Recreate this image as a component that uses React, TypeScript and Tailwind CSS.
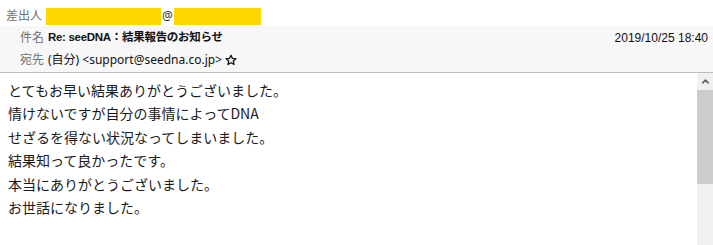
import { ChevronUp } from 'lucide-react'

const bodyLines = [
  'とてもお早い結果ありがとうございました。',
  '情けないですが自分の事情によってDNA',
  'せざるを得ない状況なってしまいました。',
  '結果知って良かったです。',
  '本当にありがとうございました。',
  'お世話になりました。',
]

function Star() {
  return (
    <svg width="12" height="12" viewBox="0 0 24 24" className="ml-[3px]">
      <path
        d="M12 2.5l2.9 6.3 6.9.7-5.2 4.6 1.5 6.8L12 17.4l-6.1 3.5 1.5-6.8-5.2-4.6 6.9-.7z"
        fill="none"
        stroke="#111"
        strokeWidth="2.6"
        strokeLinejoin="round"
      />
    </svg>
  )
}

export default function App() {
  return (
    <div className="w-[713px] h-[245px] overflow-hidden bg-white flex flex-col font-['Noto_Sans','Noto_Sans_CJK_JP',sans-serif] text-[#1a1a1a]">
      {/* From */}
      <div className="h-[26px] flex items-center pl-[6px] pt-[6px] bg-white">
        <span className="text-[12px] text-[#707070] w-[40px]">差出人</span>
        <span className="h-[17px] w-[115px] bg-[#ffd800]" />
        <span className="text-[12px] text-[#333] px-[1px]">@</span>
        <span className="h-[17px] w-[87px] bg-[#ffd800]" />
      </div>

      {/* Subject / To */}
      <div className="h-[47px] bg-[#f7f7f7] border-b border-[#bcbcbc] flex flex-col pl-[20px] pr-[5px]">
        <div className="h-[22px] mt-[1px] flex items-center">
          <span className="text-[12px] text-[#707070] w-[28px]">件名</span>
          <span className="text-[11.5px] font-bold tracking-[-0.3px] text-[#111] font-['Liberation_Sans','Noto_Sans_CJK_JP',sans-serif]">
            Re: seeDNA：結果報告のお知らせ
          </span>
          <span className="ml-auto text-[12px] text-[#111] font-['Liberation_Sans',sans-serif]">2019/10/25 18:40</span>
        </div>
        <div className="h-[24px] flex items-center">
          <span className="text-[12px] text-[#707070] w-[28px]">宛先</span>
          <span className="text-[12px] text-[#111]">(自分) &lt;support@seedna.co.jp&gt;</span>
          <Star />
        </div>
      </div>

      {/* Body */}
      <div className="flex-1 flex min-h-0">
        <div className="flex-1 pl-[8px] pt-[6px] text-[14px] leading-[23.4px] text-[#1a1a1a] font-['Noto_Sans_CJK_JP',sans-serif]">
          {bodyLines.map((l) => (
            <div key={l}>{l}</div>
          ))}
        </div>
        <div className="w-[16px] flex flex-col bg-[#f0f0f0]">
          <div className="h-[17px] flex items-center justify-center">
            <ChevronUp size={11} strokeWidth={3.5} color="#606060" />
          </div>
          <div className="h-[94px] bg-[#cdcdcd]" />
        </div>
      </div>
    </div>
  )
}
